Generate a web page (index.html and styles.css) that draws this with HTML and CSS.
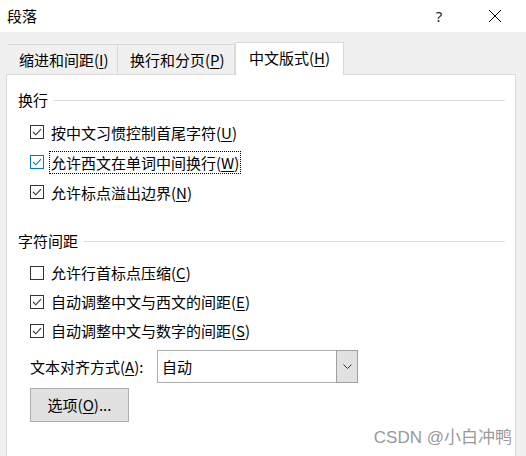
FILE: index.html
```html
<!DOCTYPE html>
<html lang="zh">
<head>
<meta charset="utf-8">
<title>段落</title>
<link rel="stylesheet" href="styles.css">
</head>
<body>
<div class="window">
  <div class="titlebar">
    <span class="title">段落</span>
    <span class="help">?</span>
    <span class="close"><svg width="14" height="14" viewBox="0 0 14 14"><path d="M1 1 L13 13 M13 1 L1 13" stroke="#000" stroke-width="1" fill="none"/></svg></span>
  </div>
  <div class="body">
    <div class="tabs">
      <div class="tab tab-1">缩进和间距(<u>I</u>)</div>
      <div class="tab tab-2">换行和分页(<u>P</u>)</div>
      <div class="tab tab-active">中文版式(<u>H</u>)</div>
    </div>
    <div class="panel">
      <div class="section">换行</div>
      <div class="group">
        <div class="row"><svg class="cb" width="14" height="14" viewBox="0 0 14 14"><rect x="0.5" y="0.5" width="13" height="13" fill="#fff" stroke="#333"/><path d="M3 7 L5.8 9.8 L11 4.2" fill="none" stroke="#333" stroke-width="1.1"/></svg><span class="label">按中文习惯控制首尾字符(<u>U</u>)</span></div>
        <div class="row"><svg class="cb" width="14" height="14" viewBox="0 0 14 14"><rect x="0.5" y="0.5" width="13" height="13" fill="#fff" stroke="#0078d7"/><path d="M3 7 L5.8 9.8 L11 4.2" fill="none" stroke="#0078d7" stroke-width="1.1"/></svg><span class="label focus">允许西文在单词中间换行(<u>W</u>)</span></div>
        <div class="row"><svg class="cb" width="14" height="14" viewBox="0 0 14 14"><rect x="0.5" y="0.5" width="13" height="13" fill="#fff" stroke="#333"/><path d="M3 7 L5.8 9.8 L11 4.2" fill="none" stroke="#333" stroke-width="1.1"/></svg><span class="label">允许标点溢出边界(<u>N</u>)</span></div>
      </div>
      <div class="section section-2">字符间距</div>
      <div class="group group-2">
        <div class="row"><svg class="cb" width="14" height="14" viewBox="0 0 14 14"><rect x="0.5" y="0.5" width="13" height="13" fill="#fff" stroke="#333"/></svg><span class="label">允许行首标点压缩(<u>C</u>)</span></div>
        <div class="row"><svg class="cb" width="14" height="14" viewBox="0 0 14 14"><rect x="0.5" y="0.5" width="13" height="13" fill="#fff" stroke="#333"/><path d="M3 7 L5.8 9.8 L11 4.2" fill="none" stroke="#333" stroke-width="1.1"/></svg><span class="label">自动调整中文与西文的间距(<u>E</u>)</span></div>
        <div class="row"><svg class="cb" width="14" height="14" viewBox="0 0 14 14"><rect x="0.5" y="0.5" width="13" height="13" fill="#fff" stroke="#333"/><path d="M3 7 L5.8 9.8 L11 4.2" fill="none" stroke="#333" stroke-width="1.1"/></svg><span class="label">自动调整中文与数字的间距(<u>S</u>)</span></div>
      </div>
      <div class="align-row">
        <span class="align-label">文本对齐方式(<u>A</u>):</span>
        <div class="select">
          <span class="select-value">自动</span>
          <span class="select-btn"><svg width="9" height="6" viewBox="0 0 9 6"><path d="M0.5 0.5 L4.5 4.5 L8.5 0.5" fill="none" stroke="#333" stroke-width="1"/></svg></span>
        </div>
      </div>
      <div class="button">选项(<u>O</u>)...</div>
    </div>
  </div>
  <div class="watermark">CSDN @小白冲鸭</div>
</div>
</body>
</html>
```
FILE: styles.css
```css
* { box-sizing: border-box; }
html, body {
  margin: 0;
  padding: 0;
}
body {
  width: 526px;
  height: 456px;
  overflow: hidden;
  background: #f0f0f0;
  font-family: "Noto Sans CJK SC", "Noto Sans", sans-serif;
  font-size: 15px;
  color: #000;
}
u { text-decoration: underline; text-underline-offset: 2px; }
.window {
  position: relative;
  width: 526px;
  height: 456px;
  display: flex;
  flex-direction: column;
}
.titlebar {
  height: 32px;
  background: #fff;
  display: flex;
  align-items: center;
  padding: 0 8px 0 7px;
  gap: 10px;
  flex: none;
}
.title {
  flex: 1;
  font-size: 15px;
  line-height: 20px;
}
.help {
  width: 46px;
  text-align: center;
  font-family: "Noto Sans", sans-serif;
  font-size: 15px;
  line-height: 20px;
  color: #222;
}
.close {
  width: 46px;
  display: flex;
  justify-content: center;
  align-items: center;
}
.body {
  flex: 1;
  display: flex;
  flex-direction: column;
  padding: 10px 10px 0 6px;
}
.tabs {
  display: flex;
  align-items: flex-end;
  padding-left: 2px;
  flex: none;
}
.tab {
  height: 30px;
  display: flex;
  align-items: center;
  background: #f0f0f0;
  border-top: 1px solid #d9d9d9;
  border-right: 1px solid #d9d9d9;
  padding-left: 11px;
  line-height: 20px;
  white-space: nowrap;
}
.tab-1 { width: 110px; }
.tab-2 { width: 117px; padding-left: 12px; }
.tab-active {
  width: 109px;
  height: 33px;
  margin-bottom: -1px;
  background: #fff;
  border: 1px solid #d9d9d9;
  border-bottom: none;
  padding-left: 13px;
  padding-bottom: 2px;
  position: relative;
  z-index: 1;
}
.panel {
  flex: 1;
  width: 510px;
  background: #fff;
  border: 1px solid #d9d9d9;
  border-bottom: none;
  padding: 15px 10px 0 11px;
}
.section {
  display: flex;
  align-items: center;
  height: 20px;
  line-height: 20px;
}
.section::after {
  content: "";
  flex: 1;
  height: 1px;
  background: #dcdcdc;
  margin-left: 6px;
}
.section-2 { margin-top: 24px; }
.group { margin-top: 7px; }
.group-2 { margin-top: 7px; }
.row {
  height: 30px;
  display: flex;
  align-items: center;
  padding-left: 12px;
}
.group-2 .row { height: 29px; }
.cb { flex: none; display: block; }
.label {
  margin-left: 5px;
  padding: 1px 1px;
  border: 1px dotted transparent;
  line-height: 19px;
  white-space: nowrap;
}
.label.focus { border-color: #000; }
.align-row {
  display: flex;
  align-items: center;
  padding-left: 12px;
  margin-top: 5px;
}
.align-label {
  width: 127px;
  white-space: nowrap;
  line-height: 20px;
}
.select {
  width: 201px;
  height: 33px;
  border: 1px solid #adadad;
  background: #fff;
  display: flex;
  align-items: stretch;
}
.select-value {
  flex: 1;
  display: flex;
  align-items: center;
  padding-left: 4px;
}
.select-btn {
  width: 22px;
  margin: -1px -1px -1px 0;
  background: #e1e1e1;
  border: 1px solid #a0a0a0;
  display: flex;
  align-items: center;
  justify-content: center;
}
.button {
  margin: 5px 0 0 12px;
  width: 99px;
  height: 34px;
  background: #e1e1e1;
  border: 1px solid #adadad;
  display: flex;
  align-items: center;
  justify-content: center;
  line-height: 20px;
}
.watermark {
  position: absolute;
  right: 14px;
  bottom: 8px;
  color: #999;
  font-family: "Liberation Sans", "Noto Sans CJK SC", sans-serif;
  font-size: 17px;
  line-height: 20px;
  white-space: nowrap;
}
```
